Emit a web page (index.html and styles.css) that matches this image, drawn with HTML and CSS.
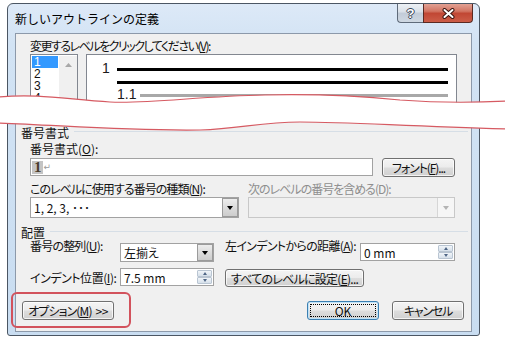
FILE: index.html
```html
<!DOCTYPE html>
<html lang="ja">
<head>
<meta charset="utf-8">
<title>新しいアウトラインの定義</title>
<link rel="stylesheet" href="styles.css">
</head>
<body>
<div class="stage">
  <div class="window">
    <div class="titlebar">
      <div class="title">新しいアウトラインの定義</div>
      <div class="caps">
        <div class="cap help">?</div>
        <div class="cap close"><svg width="13" height="11" viewBox="0 0 13 11"><path d="M2.5 2 L10.5 9 M10.5 2 L2.5 9" stroke="#3b1510" stroke-width="4" stroke-linecap="round"/><path d="M2.5 2 L10.5 9 M10.5 2 L2.5 9" stroke="#ffffff" stroke-width="2" stroke-linecap="round"/></svg></div>
      </div>
    </div>
    <div class="client">
      <div class="top">
        <div class="lbl lbl-top">変更するレベルをクリックしてください(<u>V</u>):</div>
        <div class="toprow">
          <div class="levels">
            <div class="items">
              <div class="item sel">1</div>
              <div class="item">2</div>
              <div class="item">3</div>
              <div class="item">4</div>
              <div class="item">5</div>
            </div>
            <div class="vscroll"><svg width="7" height="4" viewBox="0 0 7 4"><path d="M0 4 L3.5 0 L7 4 Z" fill="#a8a8a8"/></svg></div>
          </div>
          <div class="preview">
            <div class="pv-row"><span class="pv-num">1</span><span class="bar black"></span></div>
            <div class="pv-row"><span class="pv-num"></span><span class="bar black"></span></div>
            <div class="pv-row sub"><span class="pv-num">1.1</span><span class="bar gray"></span></div>
          </div>
        </div>
      </div>
      <div class="bottom">
        <div class="group-h">番号書式</div>
        <div class="sec">
          <div class="lbl l-fmt">番号書式(<u>O</u>):</div>
          <div class="row r-format">
            <div class="field fmt"><span class="fld1">1</span><span class="ret">↵</span></div>
            <div class="btn fontbtn">フォント(<u>F</u>)...</div>
          </div>
          <div class="row r-labels">
            <div class="lbl w-left">このレベルに使用する番号の種類(<u>N</u>):</div>
            <div class="lbl dis">次のレベルの番号を含める(D):</div>
          </div>
          <div class="row r-combos">
            <div class="combo c-style"><span class="val">1, 2, 3, ･･･</span><span class="dd"><i class="tri"></i></span></div>
            <div class="combo disabled c-incl"><span class="val"></span><span class="dd"><i class="tri"></i></span></div>
          </div>
        </div>
        <div class="group-h g2">配置</div>
        <div class="sec">
          <div class="row r1">
            <div class="lbl w-l1">番号の整列(<u>U</u>):</div>
            <div class="combo c-align"><span class="val">左揃え</span><span class="dd"><i class="tri"></i></span></div>
            <div class="lbl w-l2">左インデントからの距離(<u>A</u>):</div>
            <div class="spin s-left"><span class="val">0 mm</span><span class="spb"><i class="su"></i><i class="sd"></i></span></div>
          </div>
          <div class="row r2">
            <div class="lbl w-l1 l-ind">インデント位置(<u>I</u>):</div>
            <div class="spin s-ind"><span class="val">7.5 mm</span><span class="spb"><i class="su"></i><i class="sd"></i></span></div>
            <div class="btn allbtn">すべてのレベルに設定(<u>E</u>)...</div>
          </div>
        </div>
        <div class="row r-buttons">
          <div class="btn opt">オプション(<u>M</u>)<span class="gt">&gt;&gt;</span></div>
          <div class="spacer"></div>
          <div class="btn ok"><span class="focus">OK</span></div>
          <div class="btn cancel">キャンセル</div>
        </div>
      </div>
    </div>
  </div>
  <svg class="tear" width="505" height="338" viewBox="0 0 505 338">
    <path d="M-2,97 C40,93 70,100 110,102 C150,104 200,96 265,95 C310,94 350,95 400,100 C440,103 470,103 507,101 L507,129 C400,126 350,122 300,122 C260,122 240,129 200,130 C120,131 60,125 -2,123 Z" fill="#ffffff"/>
    <path d="M-2,97 C40,93 70,100 110,102 C150,104 200,96 265,95 C310,94 350,95 400,100 C440,103 470,103 507,101" fill="none" stroke="#d65a62" stroke-width="1.2"/>
    <path d="M-2,123 C60,125 120,131 200,130 C240,129 260,122 300,122 C350,122 400,126 507,129" fill="none" stroke="#d65a62" stroke-width="1.2"/>
  </svg>
  <div class="callout"></div>
</div>
</body>
</html>
```

FILE: styles.css
```css
* { box-sizing: border-box; margin: 0; padding: 0; }
html, body { background: #ffffff; }
body {
  width: 505px;
  height: 338px;
  overflow: hidden;
  font-family: "Noto Sans CJK JP", "Noto Sans", sans-serif;
  font-size: 12px;
  color: #000;
}
u { text-decoration: underline; text-underline-offset: 1px; }

.stage {
  position: relative;
  width: 505px;
  height: 338px;
  padding: 3px 0 0 7px;
}

.window {
  width: 473px;
  height: 333px;
  border: 1px solid #4b5663;
  border-radius: 6px 6px 3px 3px;
  background: linear-gradient(180deg, #dde9f7 0%, #d2e3f4 40px, #c9ddf1 100%);
  display: flex;
  flex-direction: column;
}

.titlebar {
  height: 29px;
  flex: 0 0 29px;
  display: flex;
  align-items: flex-start;
  padding: 0 6px 0 7px;
}
.title {
  flex: 1;
  font-size: 12px;
  line-height: 29px;
  color: #000;
}
.caps { display: flex; height: 19px; }
.cap {
  height: 19px;
  display: flex;
  align-items: center;
  justify-content: center;
}
.help {
  width: 26px;
  border: 1px solid #5f6b7a;
  border-top: none;
  border-right: none;
  border-radius: 0 0 0 4px;
  background: linear-gradient(180deg, #edf1f5 0%, #d9e0e8 45%, #c2ccd8 50%, #cfd8e2 100%);
  font-family: "Liberation Sans", sans-serif;
  font-weight: bold;
  font-size: 13px;
  color: #ffffff;
  text-shadow: 1px 0 0 #3a4656, -1px 0 0 #3a4656, 0 1px 0 #3a4656, 0 -1px 0 #3a4656;
}
.close {
  width: 50px;
  border: 1px solid #5a2a22;
  border-top: none;
  border-radius: 0 0 4px 0;
  background: linear-gradient(180deg, #e2a193 0%, #d27563 40%, #c14734 52%, #cc5d48 100%);
}

.client {
  margin: 0 7px;
  height: 299px;
  flex: 0 0 299px;
  border: 1px solid #8c99aa;
  background: #f0f0f0;
  padding-top: 4px;
  font-feature-settings: "palt";
  color: #111;
}

.lbl { line-height: 15px; white-space: nowrap; }
.lbl-top { padding-left: 14px; letter-spacing: -1.5px; }

.toprow {
  display: flex;
  margin-top: 1px;
  padding-left: 14px;
  height: 66px;
}
.levels {
  width: 48px;
  height: 66px;
  border: 1px solid #828790;
  background: #ffffff;
  display: flex;
  padding: 1px 0 0 1px;
}
.items { width: 26px; }
.item {
  height: 12px;
  line-height: 12px;
  padding-left: 2px;
  font-family: "Liberation Sans", sans-serif;
  font-size: 12px;
}
.item.sel { background: #3399ff; color: #ffffff; }
.vscroll {
  width: 18px;
  margin-left: 1px;
  background: #f0f0f0;
  display: flex;
  justify-content: center;
  align-items: flex-start;
  padding-top: 7px;
}
.preview {
  width: 371px;
  height: 66px;
  margin-left: 8px;
  background: #ffffff;
  border: 1px solid #828790;
  padding: 8px 8px 0 15px;
}
.pv-row {
  display: flex;
  align-items: center;
  height: 13px;
}
.pv-num {
  width: 15px;
  align-self: flex-start;
  line-height: 11px;
  font-family: "Liberation Sans", sans-serif;
  font-size: 14px;
  color: #1a1a1a;
}
.pv-row.sub { padding-left: 15px; }
.pv-row.sub .pv-num { width: 23px; }
.bar { flex: 1; height: 3px; }
.bar.black { background: #000000; }
.bar.gray { background: #a8a8a8; }

.bottom { padding-left: 5px; }
.group-h {
  display: flex;
  height: 13px;
  line-height: 13px;
  margin-top: 6px;
  white-space: nowrap;
}
.group-h::after {
  content: "";
  flex: 1;
  height: 1px;
  background: #d6dee6;
  margin: 5px 3px 0 5px;
}
.group-h.g2 { margin-top: 8px; }
.sec { padding-left: 9px; }
.sec .lbl { line-height: 13px; }
.row { display: flex; align-items: flex-start; }

.l-fmt { margin-top: 3px; }
.r-format { margin-top: 3px; height: 19px; }
.field {
  height: 18px;
  border: 1px solid #a2a2a2;
  background: #ffffff;
  display: flex;
  align-items: center;
  padding-left: 1px;
}
.fmt { width: 343px; }
.fld1 {
  background: #c4c4c4;
  color: #4a3d2c;
  font-family: "Liberation Serif", serif;
  font-weight: bold;
  font-size: 15px;
  line-height: 13px;
  padding: 0 1px 0 2px;
}
.ret {
  color: #9a9a9a;
  font-family: "DejaVu Sans", sans-serif;
  font-size: 9px;
  margin-left: 1px;
}

.btn {
  height: 19px;
  border: 1px solid #707070;
  border-radius: 3px;
  background: linear-gradient(180deg, #f4f4f4 0%, #ececec 48%, #dddddd 52%, #d0d0d0 100%);
  box-shadow: inset 0 0 0 1px rgba(255, 255, 255, 0.75);
  display: flex;
  align-items: center;
  justify-content: center;
  line-height: 13px;
  white-space: nowrap;
}
.fontbtn { width: 73px; margin-left: 9px; letter-spacing: -1.1px; }

.r-labels { margin-top: 5px; }
.w-left { width: 218px; letter-spacing: -0.95px; }
.lbl.dis { color: #8e8e8e; letter-spacing: -1px; }

.r-combos { margin-top: 2px; }
.combo {
  height: 21px;
  border: 1px solid #a2a2a2;
  background: #ffffff;
  display: flex;
  align-items: center;
}
.combo .val { flex: 1; padding-left: 3px; line-height: 13px; white-space: nowrap; }
.combo .dd {
  width: 16px;
  align-self: stretch;
  border: 1px solid #9b9b9b;
  background: linear-gradient(180deg, #ededed 0%, #dcdcdc 50%, #cdcdcd 100%);
  display: flex;
  align-items: center;
  justify-content: center;
}
.tri {
  width: 0;
  height: 0;
  border-left: 3.5px solid transparent;
  border-right: 3.5px solid transparent;
  border-top: 4px solid #000000;
}
.c-style { width: 209px; margin-right: 9px; }
.c-incl { width: 207px; }
.combo.disabled { background: #f0f0f0; border-color: #c8c8c8; }
.combo.disabled .dd {
  border: none;
  border-left: 1px solid #d6d6d6;
  background: #f6f6f6;
  width: 17px;
}
.combo.disabled .tri { border-top-color: #b4b4b4; }

.r1 { height: 23px; }
.w-l1 { width: 90px; letter-spacing: -0.8px; }
.c-align { width: 94px; height: 19px; margin-top: 4px; }
.w-l2 { width: 135px; margin-left: 11px; letter-spacing: -0.65px; }
.spin {
  height: 18px;
  border: 1px solid #a2a2a2;
  background: #ffffff;
  display: flex;
  align-items: center;
  padding: 1px;
}
.spin .val { flex: 1; padding-left: 2px; line-height: 13px; white-space: nowrap; }
.s-left { width: 95px; margin-top: 4px; }
.spb {
  width: 15px;
  align-self: stretch;
  display: flex;
  flex-direction: column;
}
.spb i {
  flex: 1;
  background: linear-gradient(180deg, #f1f5f9 0%, #d6e0ea 100%);
  border: 1px solid #b9c5d2;
  border-radius: 1px;
  display: flex;
  align-items: center;
  justify-content: center;
}
.spb i::after {
  content: "";
  width: 0;
  height: 0;
  border-left: 2.5px solid transparent;
  border-right: 2.5px solid transparent;
}
.spb .su::after { border-bottom: 3px solid #4f6686; }
.spb .sd::after { border-top: 3px solid #4f6686; }

.r2 { margin-top: 6px; }
.l-ind { margin-top: 3px; letter-spacing: -0.45px; }
.s-ind { width: 94px; }
.allbtn { width: 139px; height: 18px; margin-top: 1px; margin-left: 11px; letter-spacing: -0.75px; }

.r-buttons { margin-top: 14px; padding-right: 7px; }
.opt { width: 92px; margin-left: 1px; letter-spacing: -0.9px; }
.opt .gt { margin-left: 4px; letter-spacing: -0.5px; }
.spacer { flex: 1; }
.ok {
  width: 72px;
  border-color: #3c7fb1;
  box-shadow: inset 0 0 0 1px #bfe3f8;
  padding: 2px;
}
.focus {
  flex: 1;
  align-self: stretch;
  border: 1px dotted #000000;
  display: flex;
  align-items: center;
  justify-content: center;
  line-height: 11px;
}
.cancel { width: 72px; margin-left: 13px; letter-spacing: -1.2px; }

.tear {
  position: absolute;
  left: 0;
  top: 0;
  pointer-events: none;
}
.callout {
  position: absolute;
  left: 11px;
  top: 292px;
  width: 120px;
  height: 36px;
  border: 2px solid #d2525c;
  border-radius: 6px;
  pointer-events: none;
}
```
